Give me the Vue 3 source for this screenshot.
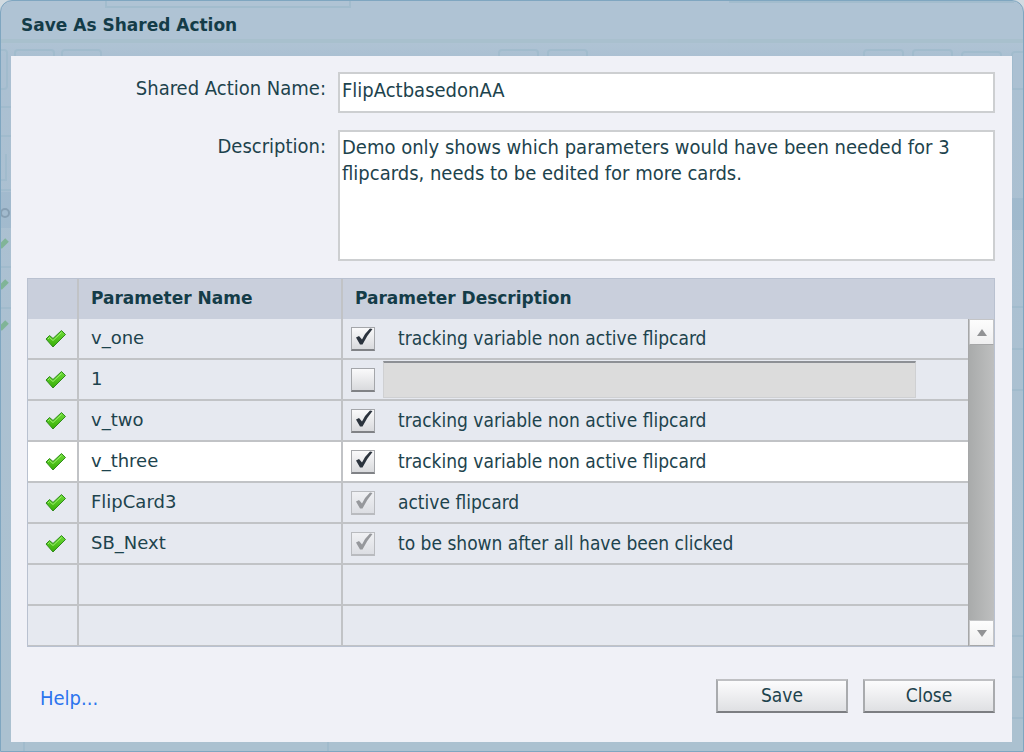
<script setup>
import { reactive, ref } from 'vue'

const actionName = ref('FlipActbasedonAA')
const description = ref(
  'Demo only shows which parameters would have been needed for 3 flipcards, needs to be edited for more cards.'
)

const rows = reactive([
  { name: 'v_one', checked: true, text: 'tracking variable non active flipcard' },
  { name: '1', checked: false, text: '' },
  { name: 'v_two', checked: true, text: 'tracking variable non active flipcard' },
  { name: 'v_three', checked: true, text: 'tracking variable non active flipcard', selected: true },
  { name: 'FlipCard3', checked: true, locked: true, text: 'active flipcard' },
  { name: 'SB_Next', checked: true, locked: true, text: 'to be shown after all have been clicked' },
  { name: '' },
  { name: '' }
])
</script>

<template>
  <main class="dialog">
    <svg class="ghost ghost-left" width="600" height="752" aria-hidden="true">
      <g fill="none" stroke="#9db9cb" stroke-width="2">
        <path d="M106 0V7H350V0" />
        <path d="M-4 50H4Q7 50 7 53V86Q7 89 4 89H-4" />
        <path d="M15 70V53Q15 50 18 50H51Q54 50 54 53V70" />
        <path d="M62 70V53Q62 50 65 50H98Q101 50 101 53V70" />
        <path d="M499 70V53Q499 50 502 50H535Q538 50 538 53V70" />
        <path d="M548 70V53Q548 50 551 50H584Q587 50 587 53V70" />
        <path d="M0 136H11M0 180H6V154M0 190H11M0 267H11M0 308H11M0 107H11" />
        <path d="M24 742V752M328 742V752" />
      </g>
      <path d="M0 192H11V228H0Z" fill="#9fb8cc" />
      <circle cx="5" cy="213" r="4" fill="none" stroke="#7892a6" stroke-width="2" />
      <path d="M0 247L7 240M0 288L7 281M0 329L7 322" stroke="#6fb07f" stroke-width="5" />
    </svg>
    <svg class="ghost ghost-right" width="300" height="752" aria-hidden="true">
      <g fill="none" stroke="#9db9cb" stroke-width="2">
        <path d="M5 2H290" />
        <path d="M140 70V53Q140 50 143 50H176Q179 50 179 53V70" />
        <path d="M189 70V53Q189 50 192 50H225Q228 50 228 53V70" />
        <path d="M238 70V55Q238 52 241 52H274Q277 52 277 55V70" />
        <path d="M288 89V55Q288 52 291 52H300M288 89H300" />
        <path d="M288 307H300M288 349H300M288 390H300M288 636H300M288 677H300M288 718H300" />
      </g>
      <path d="M288 198H300V230H288Z" fill="#9cb7cb" />
    </svg>

    <h1 class="title">Save As Shared Action</h1>

    <form class="body" @submit.prevent>
      <div class="fields">
        <label for="action-name">Shared Action Name:</label>
        <input id="action-name" v-model="actionName" class="box" type="text" />
        <label for="description">Description:</label>
        <textarea id="description" v-model="description" class="box" spellcheck="false"></textarea>
      </div>

      <div class="grid">
        <table>
          <thead>
            <tr>
              <th class="mark" aria-label="Status"></th>
              <th class="name">Parameter Name</th>
              <th>Parameter Description</th>
            </tr>
          </thead>
          <tbody>
            <tr v-for="(row, i) in rows" :key="i" :class="{ selected: row.selected }">
              <td class="mark">
                <svg v-if="row.name" class="tick" width="22" height="18" viewBox="0 0 22 18" aria-hidden="true">
                  <defs>
                    <linearGradient :id="'tick' + i" x1="0" y1="0" x2="0" y2="1">
                      <stop offset="0" stop-color="#6fdc3a" />
                      <stop offset="1" stop-color="#37ad05" />
                    </linearGradient>
                  </defs>
                  <path d="M1 9L4.500 5.500L8 8.500L16.500 0.500L20.500 4.500L8 17Z" :fill="`url(#tick${i})`" stroke="#2f8a1c" stroke-linejoin="round" />
                  <path d="M3 9L4.500 7.500L8 10.500L16.500 2.500" fill="none" stroke="#9bef6c" />
                </svg>
              </td>
              <td class="name">{{ row.name }}</td>
              <td class="desc">
                <div v-if="row.name" class="desc-line">
                  <span class="check">
                    <input
                      :id="'use' + i"
                      v-model="row.checked"
                      type="checkbox"
                      :disabled="row.locked"
                      :aria-label="'Use ' + row.name"
                    />
                    <svg v-if="row.checked" width="24" height="24" viewBox="0 0 24 24" aria-hidden="true">
                      <path d="M5 10.500L8 9L11 12.500Q14 6 19 1.500L21.500 2Q15.500 9 11.500 17.500L9 17.500Z" />
                    </svg>
                  </span>
                  <label v-if="row.text" :for="'use' + i">{{ row.text }}</label>
                  <input v-else class="empty" type="text" disabled :aria-label="'Description of ' + row.name" />
                </div>
              </td>
            </tr>
          </tbody>
        </table>
        <div class="side">
          <div class="track">
            <button type="button" aria-label="Scroll up">
              <svg width="10" height="7" viewBox="0 0 10 7"><path d="M5 0L10 7H0Z" /></svg>
            </button>
            <button type="button" aria-label="Scroll down">
              <svg width="10" height="7" viewBox="0 0 10 7"><path d="M0 0H10L5 7Z" /></svg>
            </button>
          </div>
        </div>
      </div>

      <footer>
        <a href="#help">Help...</a>
        <div class="actions">
          <button type="submit">Save</button>
          <button type="button">Close</button>
        </div>
      </footer>
    </form>
  </main>
</template>

<style>
body {
  background: #d2dbe1;
}
</style>

<style scoped>
* {
  box-sizing: border-box;
}
.dialog {
  --ui: "DejaVu Sans Condensed", "DejaVu Sans", sans-serif;
  --wide: "DejaVu Sans", sans-serif;
  position: relative;
  display: flex;
  flex-direction: column;
  min-height: 100vh;
  padding: 0 11px 9px 10px;
  overflow: hidden;
  border: 1px solid #7fa6c0;
  border-radius: 12px 12px 0 0;
  background: linear-gradient(#afc3d4 0, #afc3d4 38px, #a9c0ce 38px, #a9c0ce 42px, #afc3d4 42px, #abc0d2 56px, #abc1d0);
  color: #1d434d;
  font: 20px/26px var(--ui);
}
.ghost {
  position: absolute;
  top: -1px;
  opacity: 0.7;
}
.ghost-left {
  left: -1px;
}
.ghost-right {
  right: -1px;
}
.title {
  position: relative;
  margin: 0;
  padding: 12px 0 19px 10px;
  color: #143c48;
  font: bold 17px/24px var(--wide);
}
.body {
  position: relative;
  flex: 1;
  display: flex;
  flex-direction: column;
  padding: 16px 17px 29px 16px;
  background: #f0f1f7;
}
.fields {
  display: grid;
  grid-template-columns: 299px 1fr;
  column-gap: 12px;
  row-gap: 17px;
  margin-bottom: 17px;
}
.fields label {
  padding-top: 3px;
  text-align: right;
}
.box {
  display: block;
  width: 100%;
  margin: 0;
  border: 2px solid #cdcfd1;
  border-radius: 0;
  outline: none;
  background: #fff;
  color: inherit;
  font: inherit;
  resize: none;
}
input.box {
  height: 41px;
  padding: 0 2px 6px;
}
textarea.box {
  height: 131px;
  padding: 2px;
}
.grid {
  display: flex;
  border: 1px solid #b9c1d0;
}
table {
  flex: 1;
  border-collapse: separate;
  border-spacing: 0;
  table-layout: fixed;
}
th,
td {
  padding: 0 12px;
  border-left: 2px solid #c1c3c6;
  text-align: left;
}
th {
  height: 40px;
  padding-bottom: 2px;
  background: #c9cfdc;
  color: #143c48;
  font: bold 17px/24px var(--wide);
}
td {
  height: 41px;
  border-bottom: 2px solid #c1c3c6;
  background: #e6e9f0;
}
tr:last-child td {
  height: 40px;
  border-bottom-width: 1px;
}
.mark {
  width: 49px;
  padding: 0;
  border-left: 0;
}
.mark .tick {
  display: block;
  margin-left: 17px;
}
td.name {
  padding-bottom: 2px;
  font: 18px/24px var(--wide);
}
.name {
  width: 264px;
}
.selected td {
  background: #fff;
}
td.desc {
  padding: 0 8px;
  font-size: 19px;
}
.desc-line {
  display: flex;
  align-items: center;
}
.desc-line label {
  padding: 0 0 2px 23px;
}
.check {
  position: relative;
  display: block;
  width: 24px;
  height: 24px;
}
.check input {
  appearance: none;
  display: block;
  width: 24px;
  height: 24px;
  margin: 0;
  border: 1px solid #a4a6aa;
  border-bottom: 2px solid #808286;
  background: linear-gradient(#fafafb, #d9dadd);
}
.check input:disabled {
  border-color: #b9bbbf;
  background: linear-gradient(#f0f1f4, #dcdee3);
}
.check svg {
  position: absolute;
  inset: 0;
  fill: #2b333d;
  pointer-events: none;
}
.check input:disabled + svg {
  fill: #96989c;
}
.empty {
  width: 533px;
  height: 37px;
  margin: 0 0 0 8px;
  border: 1px solid #cfd0d2;
  border-top: 2px solid #8d9095;
  background: #dcdcdc;
}
.side {
  display: flex;
  flex-direction: column;
  width: 26px;
  padding-top: 40px;
  background: #c9cfdc;
}
.track {
  flex: 1;
  display: flex;
  flex-direction: column;
  justify-content: space-between;
  border-left: 1px solid #a6a7a8;
  background: linear-gradient(90deg, #a9abab, #bebfbf);
}
.track button {
  display: grid;
  place-items: center;
  width: 100%;
  height: 26px;
  padding: 0;
  border: 1px solid #c4c5c7;
  border-bottom-color: #a6a7a8;
  background: linear-gradient(#fdfdfd, #efeff0);
}
.track svg {
  fill: #929395;
}
footer {
  display: flex;
  align-items: center;
  justify-content: space-between;
  margin-top: auto;
  padding-left: 13px;
}
a {
  padding-top: 4px;
  color: #2c74ee;
  text-decoration: none;
}
.actions {
  display: flex;
  gap: 15px;
}
.actions button {
  width: 132px;
  height: 34px;
  padding: 0 0 2px;
  border: 2px solid #a9abae;
  border-top-color: #bfc0c3;
  border-bottom-color: #7c7e82;
  background: linear-gradient(#fcfcfd, #dfe0e3);
  color: inherit;
  font: 19px/26px var(--ui);
}
</style>
